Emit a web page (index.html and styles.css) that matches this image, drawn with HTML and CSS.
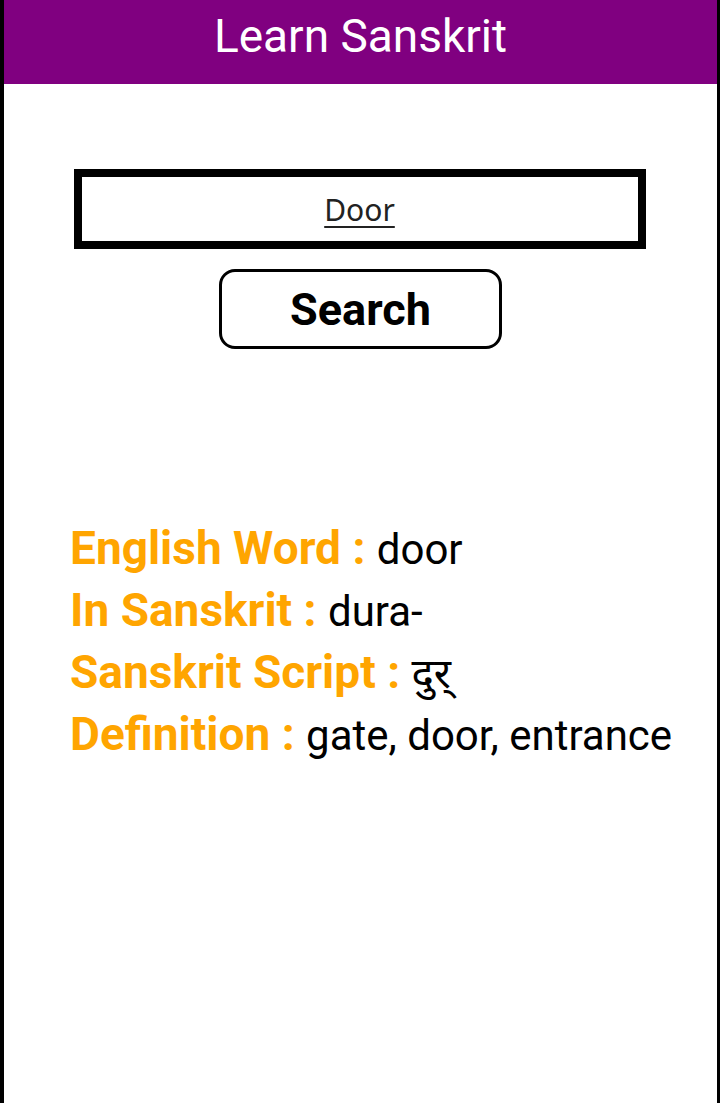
FILE: index.html
```html
<!DOCTYPE html>
<html lang="en">
<head>
<meta charset="utf-8">
<title>Learn Sanskrit</title>
<link rel="stylesheet" href="styles.css">
</head>
<body>
<div class="frame">
  <header class="appbar">Learn Sanskrit</header>
  <main class="content">
    <div class="search-box"><span class="query">Door</span></div>
    <button class="search-btn">Search</button>
    <section class="result">
      <p class="row"><span class="label">English Word : </span><span class="value">door</span></p>
      <p class="row"><span class="label">In Sanskrit : </span><span class="value">dura-</span></p>
      <p class="row"><span class="label">Sanskrit Script : </span><span class="value">दुर्</span></p>
      <p class="row"><span class="label">Definition : </span><span class="value">gate, door, entrance</span></p>
    </section>
  </main>
</div>
</body>
</html>
```
FILE: styles.css
```css
html, body {
  margin: 0;
  padding: 0;
  height: 100%;
  background: #000;
}
body {
  font-family: Roboto, "Noto Sans", "Noto Sans Devanagari", sans-serif;
}
.frame {
  box-sizing: border-box;
  height: 1103px;
  margin-left: 4px;
  margin-right: 3px;
  background: #fff;
  display: flex;
  flex-direction: column;
}
.appbar {
  box-sizing: border-box;
  height: 84px;
  padding-bottom: 12px;
  background: #800080;
  color: #fff;
  font-size: 46px;
  display: flex;
  align-items: center;
  justify-content: center;
}
.content {
  display: flex;
  flex-direction: column;
  align-items: center;
  padding-top: 85px;
}
.search-box {
  box-sizing: border-box;
  width: 572px;
  height: 80px;
  margin-right: 2px;
  border: 8px solid #000;
  display: flex;
  align-items: center;
  justify-content: center;
}
.query {
  font-family: "Noto Sans", Roboto, sans-serif;
  font-size: 30px;
  color: #222;
  text-decoration: underline;
  text-decoration-thickness: 2px;
  text-underline-offset: 5px;
}
.search-btn {
  box-sizing: border-box;
  margin-top: 20px;
  width: 283px;
  height: 80px;
  border: 3px solid #000;
  border-radius: 16px;
  background: #fff;
  font-family: Roboto, sans-serif;
  font-weight: bold;
  font-size: 45px;
  color: #000;
  padding: 0;
}
.result {
  align-self: stretch;
  padding-left: 66px;
  margin-top: 168px;
}
.row {
  margin: 0;
  font-size: 46px;
  line-height: 62px;
  white-space: nowrap;
}
.label {
  color: #ffa500;
  font-weight: bold;
}
.value {
  color: #000;
  font-size: 42px;
  line-height: 1;
}
```
